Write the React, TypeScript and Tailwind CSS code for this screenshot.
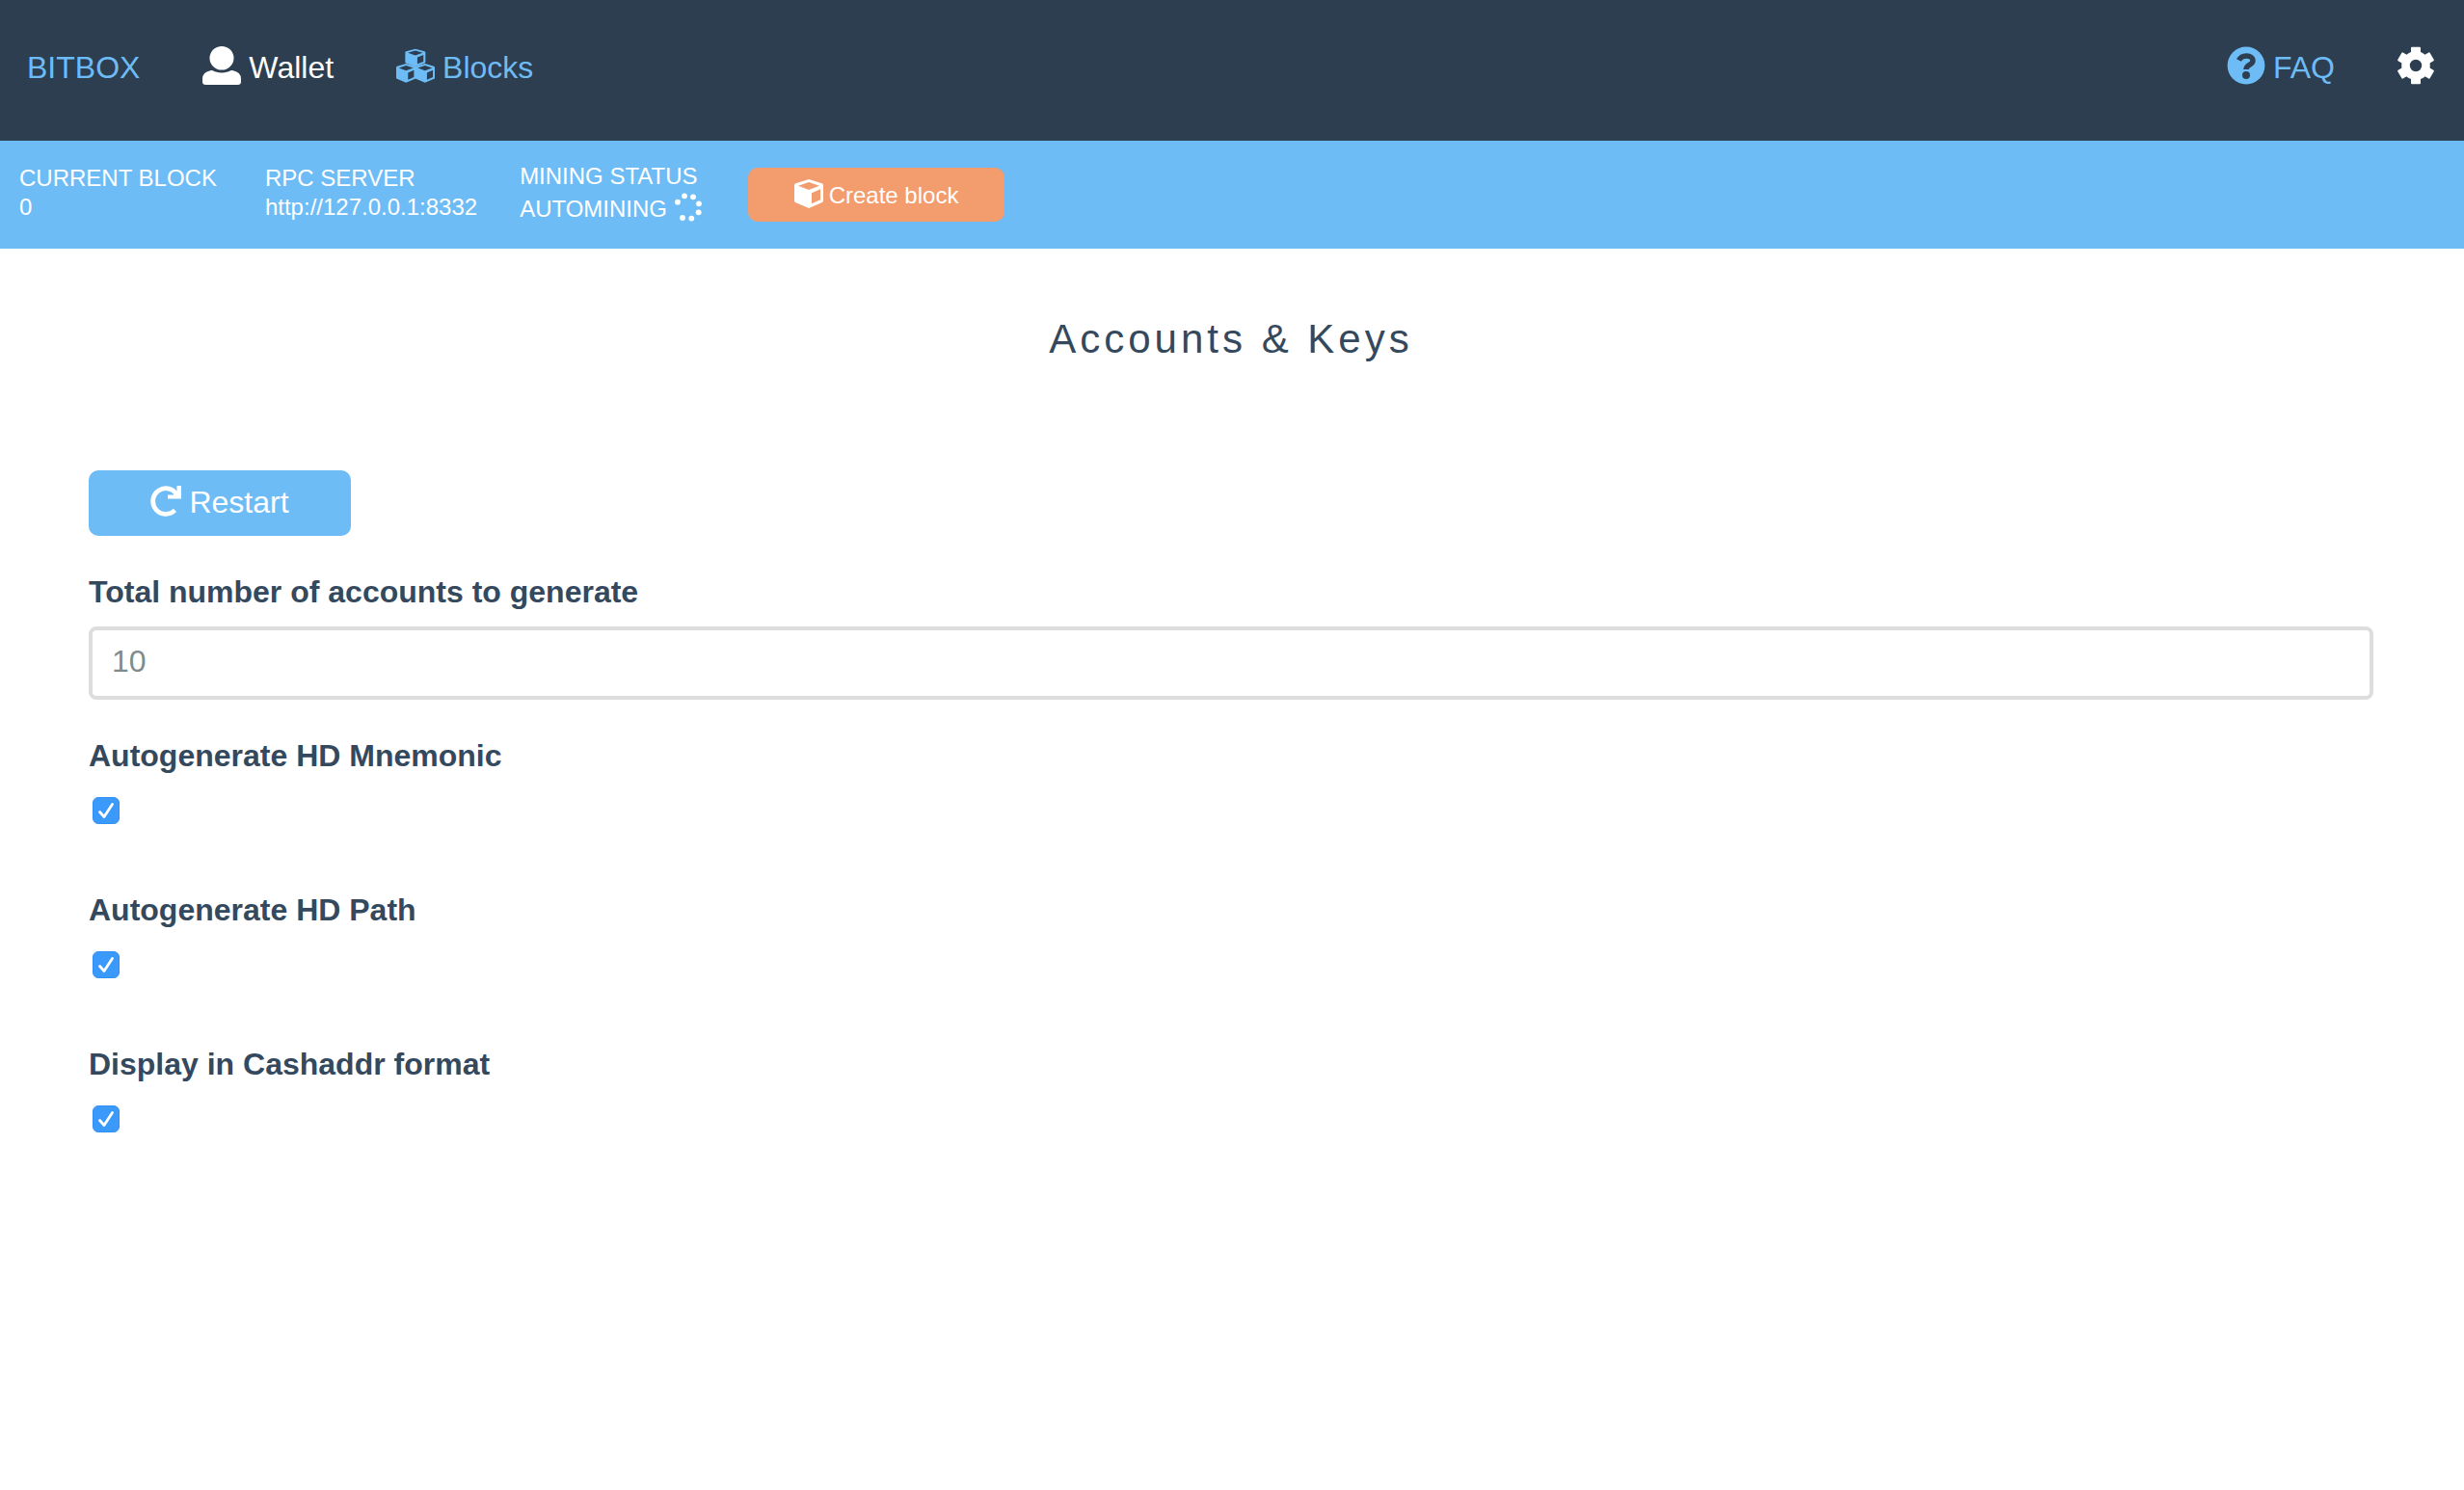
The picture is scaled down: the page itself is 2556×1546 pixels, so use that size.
const CUBE_PATH =
  "M45 0 L86 13 Q90 15 90 19 V67 Q90 70 87 72 L45 90 L3 72 Q0 70 0 67 V19 Q0 15 4 13Z M45 9 L12 20 L45 33 L78 20Z M54 43 V76 L81 64 V31Z";

function UserIcon() {
  return (
    <svg viewBox="0 0 40 40" className="size-10" fill="currentColor" aria-hidden="true">
      <ellipse cx="20" cy="12.3" rx="12.5" ry="12.3" />
      <path d="M9 25 C11 24.600 12 26 14 26.600 Q20 28.600 26 26.600 C28 26 29 24.600 31 25 Q40 26.500 40 34 V37 Q40 40 36.500 40 H3.500 Q0 40 0 37 V34 Q0 26.500 9 25Z" />
    </svg>
  );
}

function CubeIcon() {
  return (
    <svg viewBox="0 0 90 90" className="size-[30px]" fill="currentColor" fillRule="evenodd" aria-hidden="true">
      <path d={CUBE_PATH} />
    </svg>
  );
}

function CubesIcon() {
  return (
    <svg viewBox="0 -8 120 120" className="size-10" fill="currentColor" fillRule="evenodd" aria-hidden="true">
      <path d={CUBE_PATH} transform="translate(28 0) scale(0.7 0.62)" />
      <path d={CUBE_PATH} transform="translate(0 46) scale(0.68 0.66)" />
      <path d={CUBE_PATH} transform="translate(59 46) scale(0.68 0.66)" />
    </svg>
  );
}

function QuestionIcon() {
  return (
    <svg viewBox="0 0 40 40" className="size-10" aria-hidden="true">
      <circle cx="20" cy="20" r="19.4" fill="currentColor" />
      <path
        d="M12.500 14.500 C14 11.500 16.500 10 20.300 10 C24.500 10 27 12 27 15 C27 19.500 20 18.800 20 24"
        fill="none"
        stroke="#2c3e50"
        strokeWidth="5.5"
      />
      <circle cx="20" cy="30" r="4" fill="#2c3e50" />
    </svg>
  );
}

function CogIcon() {
  return (
    <svg viewBox="-20 -20 40 40" className="size-10" fill="currentColor" aria-hidden="true">
      <circle r="10.5" fill="none" stroke="currentColor" strokeWidth="8.6" />
      {[0, 60, 120, 180, 240, 300].map((angle) => (
        <rect key={angle} x="-5" y="-19.3" width="10" height="11" rx="1" transform={`rotate(${angle})`} />
      ))}
    </svg>
  );
}

function SpinnerIcon() {
  const dots = [
    [3, 9.7], [10, 3.3], [19, 4.3], [25, 11.3], [24.7, 20.3], [17.3, 26.6], [8, 26],
  ];
  return (
    <svg viewBox="0 0 30 30" className="size-[30px]" fill="currentColor" aria-hidden="true">
      {dots.map(([x, y]) => (
        <circle key={`${x}-${y}`} cx={x} cy={y} r="2.9" />
      ))}
    </svg>
  );
}

function RestartIcon() {
  return (
    <svg viewBox="0 0 32 32" className="size-8" aria-hidden="true">
      <path d="M25.400 25.400 A13.300 13.300 0 1 1 27.800 9.900" fill="none" stroke="currentColor" strokeWidth="4.8" />
      <path d="M27.500 0 H32 V13.600 H18 V9.600 H24 L27.500 6Z" fill="currentColor" />
    </svg>
  );
}

function CheckField({ id, label }: { id: string; label: string }) {
  return (
    <div className="mb-[54px]">
      <label htmlFor={id} className="block text-[32px] leading-[46px] font-bold">
        {label}
      </label>
      <div className="ml-1 grid h-[60px] w-7 items-center">
        <input
          id={id}
          type="checkbox"
          defaultChecked
          className="peer col-start-1 row-start-1 mt-2 size-7 appearance-none rounded-md border border-[#3290f5] bg-[#3b99fc]"
        />
        <svg
          viewBox="0 0 28 28"
          className="pointer-events-none invisible col-start-1 row-start-1 mt-2 size-7 peer-checked:visible"
          fill="none"
          stroke="white"
          strokeWidth="2.8"
          strokeLinecap="round"
          strokeLinejoin="round"
          aria-hidden="true"
        >
          <path d="M7.500 15.500 L12 20.500 L20.500 7.500" />
        </svg>
      </div>
    </div>
  );
}

export default function App() {
  return (
    <div className="min-h-screen bg-white font-['Liberation_Sans',Arial,sans-serif] text-[#34495e]">
      <nav className="flex h-[146px] items-start justify-between bg-[#2c3e50] pt-12 pr-[30px] pl-7 text-[32px] leading-[44px] text-[#6ebcf5]">
        <div className="flex gap-[65px]">
          <a href="#home">BITBOX</a>
          <a href="#wallet" className="flex gap-2 text-white">
            <UserIcon />
            Wallet
          </a>
          <a href="#blocks" className="flex gap-2">
            <CubesIcon />
            Blocks
          </a>
        </div>
        <div className="flex gap-16">
          <a href="#faq" className="flex gap-2">
            <QuestionIcon />
            FAQ
          </a>
          <a href="#settings" aria-label="Settings" className="text-white">
            <CogIcon />
          </a>
        </div>
      </nav>

      <section className="flex h-28 items-start bg-[#6ebcf5] px-5 pt-6 text-2xl leading-[30px] text-white">
        <div className="mr-[50px]">
          <p>CURRENT BLOCK</p>
          <p>0</p>
        </div>
        <div className="mr-11">
          <p>RPC SERVER</p>
          <p>http://127.0.0.1:8332</p>
        </div>
        <div className="mr-[46px] leading-[34px]">
          <p className="-mt-1">MINING STATUS</p>
          <p className="flex gap-2">
            AUTOMINING <SpinnerIcon />
          </p>
        </div>
        <button
          type="button"
          className="mt-1 flex h-14 w-[266px] justify-center gap-1.5 rounded-[10px] bg-[#f39c6e] pt-3 leading-[34px]"
        >
          <CubeIcon />
          Create block
        </button>
      </section>

      <main className="pr-[94px] pb-16 pl-[92px]">
        <h1 className="pt-16 text-center text-[42px] leading-[60px] tracking-[4px]">Accounts &amp; Keys</h1>
        <form className="mt-[106px]" onSubmit={(event) => event.preventDefault()}>
          <button
            type="button"
            className="mb-[35px] flex h-[68px] w-[272px] justify-center gap-2 rounded-[10px] bg-[#6ebcf5] pt-4 text-[32px] leading-[34px] text-white"
          >
            <RestartIcon />
            Restart
          </button>
          <label htmlFor="accounts" className="block pb-[13px] text-[32px] leading-[46px] font-bold">
            Total number of accounts to generate
          </label>
          <input
            id="accounts"
            type="text"
            placeholder="10"
            className="mb-[35px] block h-[76px] w-full rounded-lg border-4 border-[#dddddd] px-5 pb-1 text-[32px] placeholder:text-[#7f8c8d]"
          />
          <CheckField id="mnemonic" label="Autogenerate HD Mnemonic" />
          <CheckField id="path" label="Autogenerate HD Path" />
          <CheckField id="cashaddr" label="Display in Cashaddr format" />
        </form>
      </main>
    </div>
  );
}
